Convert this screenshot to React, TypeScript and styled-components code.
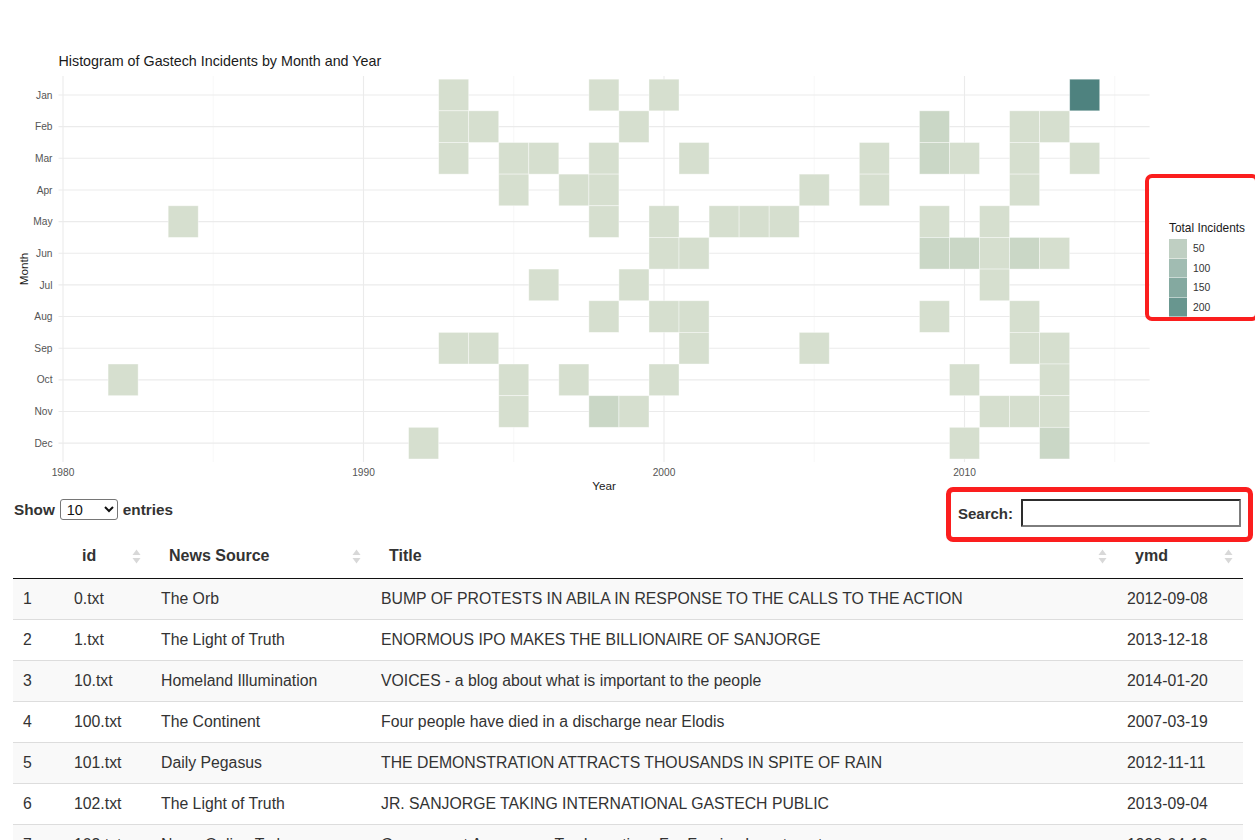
import React from "react";
import styled, { createGlobalStyle } from "styled-components";

const GlobalStyle = createGlobalStyle`
  html, body { margin: 0; padding: 0; background: #fff; }
  body { font-family: "Liberation Sans", Arial, sans-serif; color: #333; }
`;

const Page = styled.div`
  width: 1255px;
`;

/* ---------- Figure ---------- */
const Figure = styled.section`
  display: flex;
  height: 487px;
`;

const Plot = styled.svg`
  flex: none;
  overflow: visible;
  font-family: "Liberation Sans", Arial, sans-serif;
`;

const PlotTitle = styled.text`
  font-size: 14.3px;
  fill: #1a1a1a;
`;

const AxisText = styled.text`
  font-size: 10.2px;
  fill: #555;
`;

const AxisTitle = styled.text`
  font-size: 11.7px;
  fill: #1a1a1a;
`;

const LegendSlot = styled.div`
  flex: 1;
  padding: 221px 0 0 24px;
`;

const Annotated = styled.div<{ $inset: string; $w: number }>`
  position: relative;
  &::after {
    content: "";
    position: absolute;
    inset: ${(p) => p.$inset};
    border: ${(p) => p.$w}px solid #fb1e1e;
    border-radius: 7px;
    pointer-events: none;
  }
`;

const Legend = styled.div`
  width: 80px;
  display: flex;
  flex-direction: column;
`;

const LegendTitle = styled.div`
  font-size: 11.9px;
  line-height: 14px;
  color: #1a1a1a;
  margin-bottom: 4px;
  white-space: nowrap;
`;

const LegendKey = styled.div`
  display: flex;
  align-items: center;
  height: 19.5px;
`;

const Swatch = styled.span<{ $c: string }>`
  width: 18px;
  height: 19.5px;
  background: ${(p) => p.$c};
  box-shadow: inset 0 -1px 0 rgba(255, 255, 255, 0.45);
`;

const KeyLabel = styled.span`
  font-size: 10.4px;
  color: #333;
  margin-left: 6px;
`;

/* ---------- Controls ---------- */
const Controls = styled.div`
  display: flex;
  justify-content: space-between;
  align-items: flex-start;
  height: 45px;
  box-sizing: border-box;
  padding: 12px 14px 0 14px;
`;

const LengthControl = styled.label`
  display: flex;
  align-items: center;
  gap: 5px;
  height: 21px;
  font-size: 15.3px;
  font-weight: bold;
  color: #333;
`;

const LengthSelect = styled.select`
  width: 58px;
  height: 21px;
  font-family: "Liberation Sans", Arial, sans-serif;
  font-size: 14.5px;
  color: #111;
  border: 1px solid #767676;
  border-radius: 3px;
  background: #fff;
  padding: 0 0 0 2px;
`;

const SearchControl = styled.label`
  display: flex;
  align-items: center;
  gap: 8px;
  font-size: 15px;
  font-weight: bold;
  color: #333;
`;

const SearchInput = styled.input`
  width: 220px;
  height: 28px;
  box-sizing: border-box;
  border-width: 2px;
  border-style: solid;
  border-color: #2d2d2d #7d7d7d #7d7d7d #2d2d2d;
  border-radius: 1px;
  padding: 0 4px;
  font-size: 14px;
  outline: none;
`;

/* ---------- Table ---------- */
const Table = styled.table`
  margin-left: 13px;
  width: 1230px;
  border-collapse: collapse;
  table-layout: fixed;
  font-size: 15.8px;
  color: #333;
`;

const HeadCell = styled.th`
  padding: 12px 18px 10px 18px;
  text-align: left;
  font-size: 16px;
  font-weight: bold;
  line-height: 24px;
  border-bottom: 1px solid #111;
`;

const HeadInner = styled.div`
  display: flex;
  align-items: center;
  justify-content: space-between;
  margin-right: -8px;
`;

const Row = styled.tr`
  &:nth-child(odd) td {
    background: #f9f9f9;
  }
  & + & td {
    border-top: 1px solid #ddd;
  }
`;

const Cell = styled.td`
  padding: 8px 10px;
  line-height: 24px;
  white-space: nowrap;
  overflow: hidden;
`;

/* ---------- data ---------- */
const MONTHS = ["Jan", "Feb", "Mar", "Apr", "May", "Jun", "Jul", "Aug", "Sep", "Oct", "Nov", "Dec"];

// year -> [month, level]
const TILE_DATA: Record<number, [number, number][]> = {
  1982: [[10, 0]],
  1984: [[5, 0]],
  1992: [[12, 0]],
  1993: [[1, 0], [2, 0], [3, 0], [9, 0]],
  1994: [[2, 0], [9, 0]],
  1995: [[3, 0], [4, 0], [10, 0], [11, 0]],
  1996: [[3, 0], [7, 0]],
  1997: [[4, 0], [10, 0]],
  1998: [[1, 0], [3, 0], [4, 0], [5, 0], [8, 0], [11, 1]],
  1999: [[2, 0], [7, 0], [11, 0]],
  2000: [[1, 0], [5, 0], [6, 0], [8, 0], [10, 0]],
  2001: [[3, 0], [6, 0], [8, 0], [9, 0]],
  2002: [[5, 0]],
  2003: [[5, 0]],
  2004: [[5, 0]],
  2005: [[4, 0], [9, 0]],
  2007: [[3, 0], [4, 0]],
  2009: [[2, 1], [3, 1], [5, 0], [6, 1], [8, 0]],
  2010: [[3, 0], [6, 1], [10, 0], [12, 0]],
  2011: [[5, 0], [6, 0], [7, 0], [11, 0]],
  2012: [[2, 0], [3, 0], [4, 0], [6, 1], [8, 0], [9, 0], [11, 0]],
  2013: [[2, 0], [6, 0], [9, 0], [10, 0], [11, 0], [12, 1]],
  2014: [[1, 2], [3, 0]],
};

const LEVEL_COLORS = ["#d6dfcf", "#cad7c6", "#4e827f"];
const LEGEND = [
  { label: "50", color: "#bfcfc2" },
  { label: "100", color: "#a1bcb2" },
  { label: "150", color: "#84a9a0" },
  { label: "200", color: "#68968f" },
];

const ROWS = [
  ["1", "0.txt", "The Orb", "BUMP OF PROTESTS IN ABILA IN RESPONSE TO THE CALLS TO THE ACTION", "2012-09-08"],
  ["2", "1.txt", "The Light of Truth", "ENORMOUS IPO MAKES THE BILLIONAIRE OF SANJORGE", "2013-12-18"],
  ["3", "10.txt", "Homeland Illumination", "VOICES - a blog about what is important to the people", "2014-01-20"],
  ["4", "100.txt", "The Continent", "Four people have died in a discharge near Elodis", "2007-03-19"],
  ["5", "101.txt", "Daily Pegasus", "THE DEMONSTRATION ATTRACTS THOUSANDS IN SPITE OF RAIN", "2012-11-11"],
  ["6", "102.txt", "The Light of Truth", "JR. SANJORGE TAKING INTERNATIONAL GASTECH PUBLIC", "2013-09-04"],
  ["7", "103.txt", "News Online Today", "Government Announces Tax Incentives For Foreign Investment", "1998-04-13"],
];

const COLUMNS = [
  { label: "", width: 51, sortable: false },
  { label: "id", width: 87, sortable: true },
  { label: "News Source", width: 220, sortable: true },
  { label: "Title", width: 746, sortable: true },
  { label: "ymd", width: 126, sortable: true },
];

/* ---------- geometry ---------- */
const X0 = 63;
const PX = 30.05;
const Y0 = 95;
const PY = 31.65;
const PANEL = { left: 58.5, right: 1149.6, top: 76, bottom: 462 };
const xOf = (yr: number) => X0 + (yr - 1980) * PX;
const yOf = (m: number) => Y0 + (m - 1) * PY;

const SortIcon = () => (
  <svg width="9" height="17" viewBox="0 0 9 17" aria-hidden="true">
    <polygon points="0.5,7 4.5,1.5 8.5,7" fill="#d8d8d8" />
    <polygon points="0.5,10 4.5,15.5 8.5,10" fill="#d8d8d8" />
  </svg>
);

const HeatmapPlot = () => {
  const tiles: { yr: number; m: number; lv: number }[] = [];
  Object.entries(TILE_DATA).forEach(([yr, list]) =>
    list.forEach(([m, lv]) => tiles.push({ yr: Number(yr), m, lv }))
  );
  return (
    <Plot width={1145} height={487} viewBox="0 0 1145 487">
      <PlotTitle x={58.5} y={66}>
        Histogram of Gastech Incidents by Month and Year
      </PlotTitle>
      {[1985, 1995, 2005, 2015].map((yr) => (
        <line key={`mn${yr}`} x1={xOf(yr)} x2={xOf(yr)} y1={PANEL.top} y2={PANEL.bottom} stroke="#f4f4f4" strokeWidth={0.6} />
      ))}
      {[1980, 1990, 2000, 2010].map((yr) => (
        <line key={`mj${yr}`} x1={xOf(yr)} x2={xOf(yr)} y1={PANEL.top} y2={PANEL.bottom} stroke="#ebebeb" strokeWidth={1.1} />
      ))}
      {MONTHS.map((_, i) => (
        <line key={`h${i}`} x1={PANEL.left} x2={PANEL.right} y1={yOf(i + 1)} y2={yOf(i + 1)} stroke="#ebebeb" strokeWidth={1.1} />
      ))}
      {tiles.map((t) => (
        <rect
          key={`${t.yr}-${t.m}`}
          x={xOf(t.yr) - PX / 2}
          y={yOf(t.m) - PY / 2}
          width={PX}
          height={PY}
          fill={LEVEL_COLORS[t.lv]}
          stroke="rgba(255,255,255,0.5)"
          strokeWidth={0.8}
        />
      ))}
      {MONTHS.map((m, i) => (
        <AxisText key={m} x={52.5} y={yOf(i + 1) + 3.6} textAnchor="end">
          {m}
        </AxisText>
      ))}
      {[1980, 1990, 2000, 2010].map((yr) => (
        <AxisText key={`t${yr}`} x={xOf(yr)} y={475.5} textAnchor="middle">
          {yr}
        </AxisText>
      ))}
      <AxisTitle x={(PANEL.left + PANEL.right) / 2} y={489.5} textAnchor="middle">
        Year
      </AxisTitle>
      <AxisTitle transform={`translate(28.3,${(PANEL.top + PANEL.bottom) / 2}) rotate(-90)`} textAnchor="middle">
        Month
      </AxisTitle>
    </Plot>
  );
};

export default function App() {
  return (
    <Page>
      <GlobalStyle />
      <Figure>
        <HeatmapPlot />
        <LegendSlot>
          <Annotated $inset="-47px -4px -4px -24px" $w={4}>
            <Legend>
              <LegendTitle>Total Incidents</LegendTitle>
              {LEGEND.map((k) => (
                <LegendKey key={k.label}>
                  <Swatch $c={k.color} />
                  <KeyLabel>{k.label}</KeyLabel>
                </LegendKey>
              ))}
            </Legend>
          </Annotated>
        </LegendSlot>
      </Figure>

      <Controls>
        <LengthControl>
          Show
          <LengthSelect defaultValue="10">
            <option value="10">10</option>
            <option value="25">25</option>
            <option value="50">50</option>
            <option value="100">100</option>
          </LengthSelect>
          entries
        </LengthControl>
        <Annotated $inset="-12px -12px -15px -12px" $w={5}>
          <SearchControl>
            Search:
            <SearchInput type="search" />
          </SearchControl>
        </Annotated>
      </Controls>

      <Table>
        <colgroup>
          {COLUMNS.map((c, i) => (
            <col key={i} style={{ width: c.width }} />
          ))}
        </colgroup>
        <thead>
          <tr>
            {COLUMNS.map((c, i) => (
              <HeadCell key={i}>
                {c.sortable ? (
                  <HeadInner>
                    <span>{c.label}</span>
                    <SortIcon />
                  </HeadInner>
                ) : null}
              </HeadCell>
            ))}
          </tr>
        </thead>
        <tbody>
          {ROWS.map((r) => (
            <Row key={r[0]}>
              {r.map((v, i) => (
                <Cell key={i}>{v}</Cell>
              ))}
            </Row>
          ))}
        </tbody>
      </Table>
    </Page>
  );
}
